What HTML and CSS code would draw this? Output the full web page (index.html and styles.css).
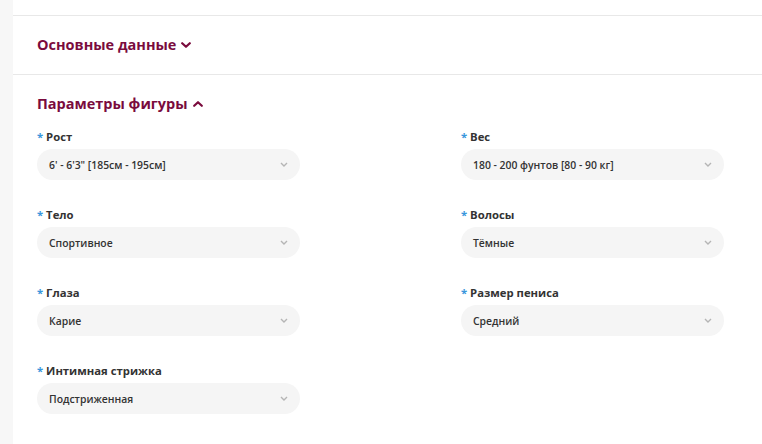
FILE: index.html
```html
<!DOCTYPE html>
<html lang="ru">
<head>
<meta charset="utf-8">
<link rel="stylesheet" href="styles.css">
</head>
<body>
<div class="page">
  <div class="side"></div>
  <div class="main">
    <div class="top"></div>
    <div class="section">
      <h2 class="heading">Основные данные
        <svg class="hchev" viewBox="0 0 10 6" width="10" height="6"><path d="M1.2 1.2 L5 4.8 L8.8 1.2" fill="none" stroke="currentColor" stroke-width="2.2" stroke-linecap="round" stroke-linejoin="round"/></svg>
      </h2>
    </div>
    <div class="section open">
      <h2 class="heading">Параметры фигуры
        <svg class="hchev" viewBox="0 0 10 6" width="10" height="6"><path d="M1.2 4.8 L5 1.2 L8.8 4.8" fill="none" stroke="currentColor" stroke-width="2.2" stroke-linecap="round" stroke-linejoin="round"/></svg>
      </h2>
      <div class="grid">
        <div class="field">
          <div class="label"><span class="req">*</span> Рост</div>
          <div class="select"><span>6' - 6'3" [185см - 195см]</span><svg class="chev" viewBox="0 0 8 5" width="8" height="5"><path d="M1 1 L4 4 L7 1" fill="none" stroke="currentColor" stroke-width="1.4"/></svg></div>
        </div>
        <div class="field">
          <div class="label"><span class="req">*</span> Вес</div>
          <div class="select"><span>180 - 200 фунтов [80 - 90 кг]</span><svg class="chev" viewBox="0 0 8 5" width="8" height="5"><path d="M1 1 L4 4 L7 1" fill="none" stroke="currentColor" stroke-width="1.4"/></svg></div>
        </div>
        <div class="field">
          <div class="label"><span class="req">*</span> Тело</div>
          <div class="select"><span>Спортивное</span><svg class="chev" viewBox="0 0 8 5" width="8" height="5"><path d="M1 1 L4 4 L7 1" fill="none" stroke="currentColor" stroke-width="1.4"/></svg></div>
        </div>
        <div class="field">
          <div class="label"><span class="req">*</span> Волосы</div>
          <div class="select"><span>Тёмные</span><svg class="chev" viewBox="0 0 8 5" width="8" height="5"><path d="M1 1 L4 4 L7 1" fill="none" stroke="currentColor" stroke-width="1.4"/></svg></div>
        </div>
        <div class="field">
          <div class="label"><span class="req">*</span> Глаза</div>
          <div class="select"><span>Карие</span><svg class="chev" viewBox="0 0 8 5" width="8" height="5"><path d="M1 1 L4 4 L7 1" fill="none" stroke="currentColor" stroke-width="1.4"/></svg></div>
        </div>
        <div class="field">
          <div class="label"><span class="req">*</span> Размер пениса</div>
          <div class="select"><span>Средний</span><svg class="chev" viewBox="0 0 8 5" width="8" height="5"><path d="M1 1 L4 4 L7 1" fill="none" stroke="currentColor" stroke-width="1.4"/></svg></div>
        </div>
        <div class="field">
          <div class="label"><span class="req">*</span> Интимная стрижка</div>
          <div class="select"><span>Подстриженная</span><svg class="chev" viewBox="0 0 8 5" width="8" height="5"><path d="M1 1 L4 4 L7 1" fill="none" stroke="currentColor" stroke-width="1.4"/></svg></div>
        </div>
      </div>
    </div>
  </div>
</div>
</body>
</html>
```
FILE: styles.css
```css
html, body {
  margin: 0;
  padding: 0;
  background: #ffffff;
}
body {
  font-family: "Open Sans", "Noto Sans", sans-serif;
  color: #333333;
}
.page {
  display: flex;
  min-height: 444px;
}
.side {
  width: 13px;
  flex: 0 0 13px;
  background: #f7f7f7;
}
.main {
  flex: 1;
  background: #ffffff;
}
.top {
  height: 15px;
  border-bottom: 1px solid #e8e8e8;
}
.section {
  padding: 19px 38px 19px 24px;
  border-bottom: 1px solid #e8e8e8;
}
.section.open {
  border-bottom: none;
  padding-bottom: 40px;
}
.heading {
  margin: 0;
  font-size: 14.5px;
  line-height: 20px;
  font-weight: 700;
  color: #7a0b3d;
  display: flex;
  align-items: center;
  gap: 5px;
}
.hchev {
  display: block;
}
.grid {
  margin-top: 15px;
  display: grid;
  grid-template-columns: 263px 263px;
  justify-content: space-between;
  row-gap: 27px;
}
.label {
  font-size: 11.3px;
  line-height: 16px;
  font-weight: 700;
  color: #333333;
  margin-bottom: 4px;
}
.req {
  color: #3a97dc;
}
.select {
  height: 31px;
  border-radius: 15.5px;
  background: #f5f5f5;
  display: flex;
  align-items: center;
  justify-content: space-between;
  padding: 0 12px 0 12px;
  font-size: 10.4px;
  font-weight: 600;
  color: #333333;
}
.chev {
  color: #b5b5b5;
  display: block;
}
```
